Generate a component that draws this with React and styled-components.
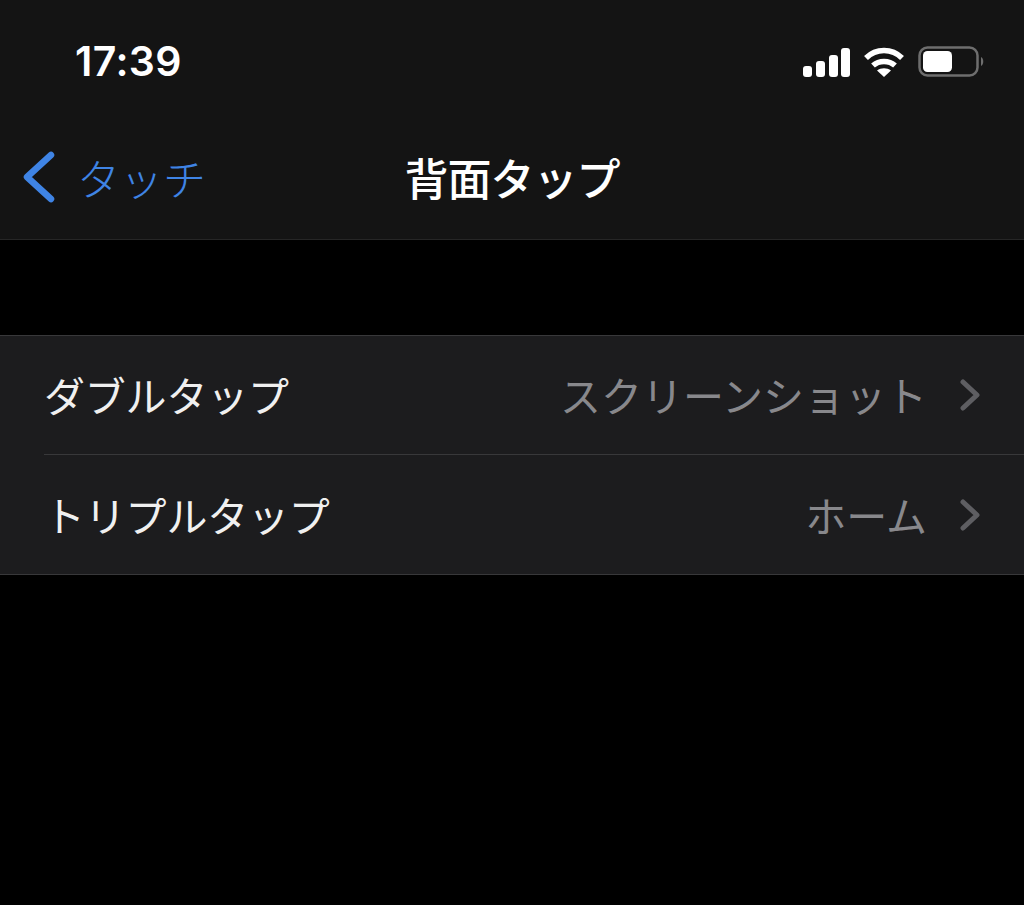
import React from "react";
import styled, { createGlobalStyle } from "styled-components";

const Global = createGlobalStyle`
  html, body { margin: 0; padding: 0; background: #000; }
  body { font-family: "Noto Sans CJK JP", "Liberation Sans", sans-serif; }
`;
const Page = styled.div`
  width: 1024px; height: 905px; background: #000; overflow: hidden;
`;
const Header = styled.header`
  height: 239px; background: #141414; border-bottom: 1px solid #262626;
  display: flex; flex-direction: column;
`;
const StatusBar = styled.div`
  height: 122px; display: flex; align-items: flex-start; justify-content: space-between;
  padding: 38px 39px 0 75px; box-sizing: border-box;
`;
const Time = styled.span`
  font-family: Inter, "Liberation Sans", sans-serif; font-size: 41px; font-weight: 600;
  line-height: 47px; color: #fff; letter-spacing: 0.4px;
`;
const StatusIcons = styled.div`
  display: flex; align-items: center; gap: 13px; padding-top: 8px;
`;
const NavBar = styled.nav`
  height: 117px; display: flex; align-items: flex-start; justify-content: center; position: relative;
`;
const Title = styled.h1`
  margin: 25px 0 0; font-size: 44px; line-height: 60px; font-weight: 500; color: #fff; letter-spacing: -1px;
`;
const Back = styled.div`
  position: absolute; left: 23px; top: 25px; display: flex; align-items: center; gap: 22px;
  color: #3f84e5; font-size: 43px; line-height: 60px; font-weight: 300; letter-spacing: 0;
`;
const Group = styled.section`
  margin-top: 95px; background: #1c1c1e; border-top: 1px solid #38383a; border-bottom: 1px solid #38383a;
`;
const Row = styled.div`
  height: 119px; display: flex; align-items: center; justify-content: space-between;
  margin-left: 44px; padding-right: 44px; box-sizing: border-box;
  border-bottom: ${(p) => (p.$last ? "none" : "1px solid #38383a")};
`;
const Label = styled.span`
  font-size: 41px; line-height: 56px; font-weight: 400; color: #f0f0f0; letter-spacing: -0.2px; position: relative; top: -1px;
`;
const Right = styled.div`
  display: flex; align-items: center; gap: 33px;
`;
const Value = styled.span`
  font-size: 41px; line-height: 56px; font-weight: 400; color: #88888c; position: relative; top: -1px;
`;

const Signal = () => (
  <svg width="47" height="29" viewBox="0 0 47 29" fill="#fff">
    <rect x="0" y="18" width="9" height="11" rx="3" />
    <rect x="13" y="13" width="9" height="16" rx="3" />
    <rect x="26" y="7" width="9" height="22" rx="3" />
    <rect x="38" y="0" width="9" height="29" rx="3" />
  </svg>
);
const Wifi = () => (
  <svg width="42" height="30" viewBox="0 0 42 30" fill="none" stroke="#fff" strokeWidth="5.5">
    <path d="M3 11 C13 1 29 1 39 11" />
    <path d="M10 18.5 C16 13 26 13 32 18.5" />
    <path d="M21 30 L14 23.5 C18 20.5 24 20.5 28 23.5 Z" fill="#fff" stroke="none" />
  </svg>
);
const Battery = () => (
  <svg width="67" height="32" viewBox="0 0 67 32">
    <rect x="1.5" y="1.5" width="58" height="28" rx="8" fill="none" stroke="#6e6e6e" strokeWidth="2.5" />
    <rect x="5" y="5" width="29" height="21" rx="4.5" fill="#fff" />
    <path d="M63 11 C66 12.5 66 18.5 63 20 Z" fill="#6e6e6e" />
  </svg>
);
const BackChevron = () => (
  <svg width="32" height="52" viewBox="0 0 32 52" fill="none" stroke="#3f84e5" strokeWidth="6.5" strokeLinecap="round" strokeLinejoin="round">
    <path d="M28 4 L4 26 L28 48" />
  </svg>
);
const Chevron = () => (
  <svg width="20" height="32" viewBox="0 0 20 32" fill="none" stroke="#5e5e62" strokeWidth="5" strokeLinecap="round" strokeLinejoin="round">
    <path d="M3 3 L17 16 L3 29" />
  </svg>
);

export default function App() {
  return (
    <Page>
      <Global />
      <Header>
        <StatusBar>
          <Time>17:39</Time>
          <StatusIcons>
            <Signal />
            <Wifi />
            <Battery />
          </StatusIcons>
        </StatusBar>
        <NavBar>
          <Back>
            <BackChevron />
            <span>タッチ</span>
          </Back>
          <Title>背面タップ</Title>
        </NavBar>
      </Header>
      <Group>
        <Row>
          <Label>ダブルタップ</Label>
          <Right>
            <Value>スクリーンショット</Value>
            <Chevron />
          </Right>
        </Row>
        <Row $last>
          <Label>トリプルタップ</Label>
          <Right>
            <Value>ホーム</Value>
            <Chevron />
          </Right>
        </Row>
      </Group>
    </Page>
  );
}
